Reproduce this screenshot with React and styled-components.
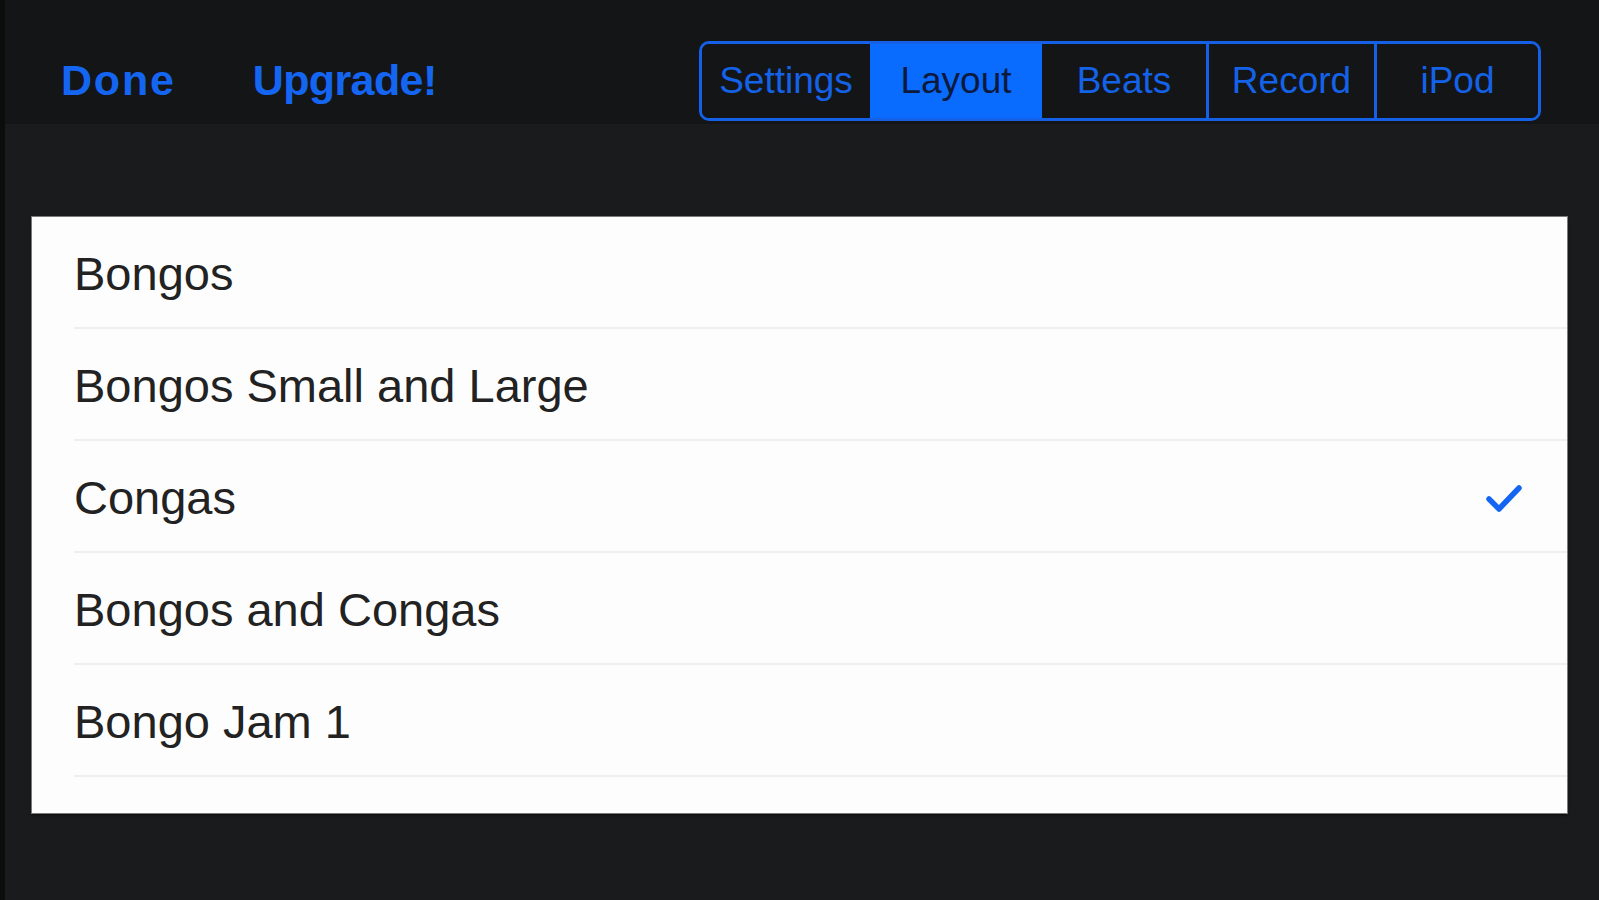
import React from 'react';
import styled, { createGlobalStyle } from 'styled-components';

const GlobalStyle = createGlobalStyle`
  html, body {
    margin: 0;
    padding: 0;
    background: #1a1b1d;
    overflow: hidden;
  }
  body {
    font-family: "Liberation Sans", Arial, sans-serif;
  }
`;

const Screen = styled.div`
  width: 1599px;
  height: 900px;
  background: #1a1b1d;
  border-left: 5px solid #0c0c0d;
  box-sizing: border-box;
  display: flex;
  flex-direction: column;
`;

const Header = styled.div`
  height: 124px;
  box-sizing: border-box;
  background: #141516;
  display: flex;
  align-items: flex-start;
  padding: 41px 58px 0 56px;
`;

const NavButton = styled.span`
  display: flex;
  align-items: center;
  height: 78px;
  margin-right: ${props => props.gap || 0}px;
  color: #1466f2;
  font-size: 43px;
  font-weight: bold;
  letter-spacing: ${props => props.spacing || 0}px;
`;

const Spacer = styled.div`
  flex: 1;
`;

const Segmented = styled.div`
  display: flex;
  height: 80px;
  box-sizing: border-box;
  border: 3px solid #1460e6;
  border-radius: 10px;
  overflow: hidden;
`;

const Segment = styled.div`
  width: ${props => props.w}px;
  display: flex;
  align-items: center;
  justify-content: center;
  font-size: 37px;
  color: ${props => (props.active ? '#0c1a3c' : '#1462e8')};
  background: ${props => (props.active ? '#0a6bff' : '#141516')};
  border-left: ${props => (props.divider ? '3px solid #1460e6' : 'none')};
  box-sizing: border-box;
`;

const Card = styled.div`
  margin: 93px 32px 0 27px;
  background: #fdfdfd;
  padding-bottom: 36px;
  box-shadow: 0 0 0 1px #7a7a7a, 0 2px 3px rgba(0, 0, 0, 0.6);
`;

const Row = styled.div`
  height: 112px;
  margin-left: 42px;
  padding-right: 44px;
  box-sizing: border-box;
  display: flex;
  align-items: center;
  justify-content: space-between;
  border-bottom: 2px solid #efefef;
  font-size: 47px;
  color: #222;
  padding-top: 3px;
`;

const Check = () => (
  <svg width="38" height="32" viewBox="0 0 38 32">
    <path d="M4 17 L14 27 L34 6" fill="none" stroke="#1466f2" strokeWidth="5.5" strokeLinecap="round" strokeLinejoin="round" />
  </svg>
);

const segments = [
  { label: 'Settings', w: 168 },
  { label: 'Layout', w: 172, active: true },
  { label: 'Beats', w: 164 },
  { label: 'Record', w: 168, divider: true },
  { label: 'iPod', w: 164, divider: true },
];

const layouts = ['Bongos', 'Bongos Small and Large', 'Congas', 'Bongos and Congas', 'Bongo Jam 1'];

export default function App() {
  return (
    <Screen>
      <GlobalStyle />
      <Header>
        <NavButton gap={77} spacing={1.8}>Done</NavButton>
        <NavButton spacing={-0.6}>Upgrade!</NavButton>
        <Spacer />
        <Segmented>
          {segments.map(s => (
            <Segment key={s.label} w={s.w} active={s.active} divider={s.divider}>
              {s.label}
            </Segment>
          ))}
        </Segmented>
      </Header>
      <Card>
        {layouts.map(name => (
          <Row key={name}>
            <span>{name}</span>
            {name === 'Congas' && <Check />}
          </Row>
        ))}
      </Card>
    </Screen>
  );
}
